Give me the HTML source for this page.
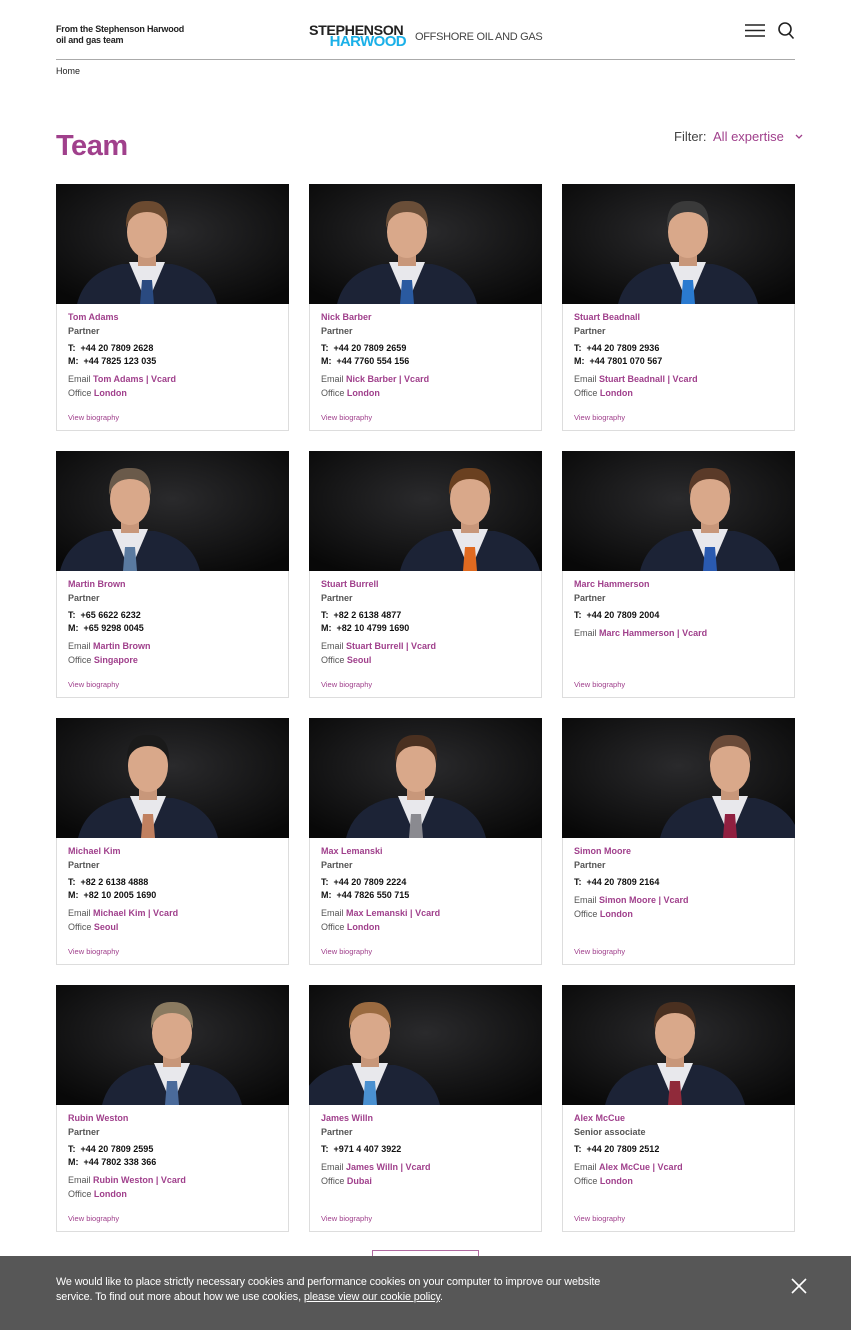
<!DOCTYPE html>
<html><head><meta charset="utf-8"><style>
*{margin:0;padding:0;box-sizing:border-box}
body{width:851px;height:1330px;overflow:hidden;background:#fff;font-family:"Liberation Sans",sans-serif;color:#222;position:relative}
.hdr-l{position:absolute;left:56px;top:24px;font-size:9px;font-weight:bold;line-height:11px;letter-spacing:-.2px}
.logo{position:absolute;left:309px;top:24px;font-weight:bold;font-size:14px;line-height:12px;letter-spacing:-.4px;width:97px}
.logo .a{display:block;transform:scaleX(1.02);transform-origin:left}
.logo .b{color:#1ab0e8;display:block;text-align:right;font-size:15px;letter-spacing:-.6px}
.logo2{position:absolute;left:415px;top:31px;font-size:11px;color:#444;letter-spacing:-.3px}
.line{position:absolute;left:56px;top:59px;width:739px;height:1px;background:#aaa}
.home{position:absolute;left:56px;top:66px;font-size:9px}
h1{position:absolute;left:56px;top:130px;font-size:29px;color:#a0408c;font-weight:bold;letter-spacing:-.5px}
.filter{position:absolute;left:674px;top:129px;font-size:13px;color:#444}
.filter span{color:#a0408c}
.card{position:absolute;width:233px;height:247px;border:1px solid #ddd;background:#fff}
.card svg{display:block;position:absolute;left:-1px;top:-1px}
.info{position:absolute;left:11px;top:125px;font-size:9px;line-height:14px;color:#555}
.p{color:#a0408c;font-weight:bold}
.n{color:#a0408c;font-weight:bold;display:block}
.bk{color:#111;font-weight:bold;line-height:13px}
.vb{position:absolute;left:11px;top:228px;font-size:7.5px;color:#a0408c}
.btn{position:absolute;left:372px;top:1250px;width:107px;height:20px;border:1px solid #b06aa0}
.cookie{position:absolute;left:0;top:1256px;width:851px;height:74px;background:#575757;color:#fff;font-size:10.8px;line-height:15px;padding:19px 0 0 56px;letter-spacing:-.1px}
.cookie u{color:#fff}
.x{position:absolute;left:790px;top:1277px}
</style></head><body>
<div class="hdr-l">From the Stephenson Harwood<br>oil and gas team</div>
<div class="logo"><span class="a">STEPHENSON</span><span class="b">HARWOOD</span></div>
<div class="logo2">OFFSHORE OIL AND GAS</div>
<svg style="position:absolute;left:744px;top:22px" width="52" height="18"><g stroke="#222" stroke-width="1.6" fill="none"><line x1="1" y1="3" x2="21" y2="3"/><line x1="1" y1="8.5" x2="21" y2="8.5"/><line x1="1" y1="14" x2="21" y2="14"/><circle cx="41" cy="7" r="6"/><line x1="45" y1="11.5" x2="49.5" y2="16.5"/></g></svg>
<div class="line"></div>
<div class="home">Home</div>
<h1>Team</h1>
<div class="filter">Filter:&nbsp; <span>All expertise</span></div>
<svg style="position:absolute;left:795px;top:134px" width="8" height="6"><path d="M1 1 L4 4 L7 1" stroke="#a0408c" stroke-width="1.3" fill="none"/></svg>
<div id="cards"></div>
<div class="btn"></div>
<div class="cookie">We would like to place strictly necessary cookies and performance cookies on your computer to improve our website<br>service. To find out more about how we use cookies, <u>please view our cookie policy</u>.</div>
<svg class="x" width="18" height="18"><g stroke="#fff" stroke-width="1.6"><line x1="2" y1="2" x2="16" y2="16"/><line x1="16" y1="2" x2="2" y2="16"/></g></svg>
<script>
var d=[
["Tom Adams","Partner","+44 20 7809 2628","+44 7825 123 035","Tom Adams | Vcard","London",91,"#2a4a80","#6b4a30"],
["Nick Barber","Partner","+44 20 7809 2659","+44 7760 554 156","Nick Barber | Vcard","London",98,"#2a5aa0","#6a4e38"],
["Stuart Beadnall","Partner","+44 20 7809 2936","+44 7801 070 567","Stuart Beadnall | Vcard","London",126,"#2a7ad0","#3a3a3a"],
["Martin Brown","Partner","+65 6622 6232","+65 9298 0045","Martin Brown","Singapore",74,"#5a7aa0","#6a5a4a"],
["Stuart Burrell","Partner","+82 2 6138 4877","+82 10 4799 1690","Stuart Burrell | Vcard","Seoul",161,"#e06a20","#6a4020"],
["Marc Hammerson","Partner","+44 20 7809 2004","","Marc Hammerson | Vcard","",148,"#2a5ab0","#5a3a28"],
["Michael Kim","Partner","+82 2 6138 4888","+82 10 2005 1690","Michael Kim | Vcard","Seoul",92,"#c08060","#1a1a1a"],
["Max Lemanski","Partner","+44 20 7809 2224","+44 7826 550 715","Max Lemanski | Vcard","London",107,"#8a8a90","#4a3020"],
["Simon Moore","Partner","+44 20 7809 2164","","Simon Moore | Vcard","London",168,"#902040","#6a4a38"],
["Rubin Weston","Partner","+44 20 7809 2595","+44 7802 338 366","Rubin Weston | Vcard","London",116,"#4a6a9a","#8a7a60"],
["James Willn","Partner","+971 4 407 3922","","James Willn | Vcard","Dubai",61,"#4a90d0","#9a6a40"],
["Alex McCue","Senior associate","+44 20 7809 2512","","Alex McCue | Vcard","London",113,"#902a3a","#4a3020"]];
var h="";
d.forEach(function(c,i){
var x=56+(i%3)*253,y=184+Math.floor(i/3)*267,cx=c[6];
var svg='<svg width="233" height="120" viewBox="0 0 233 120"><defs><radialGradient id="g'+i+'" cx="50%" cy="40%" r="70%"><stop offset="0" stop-color="#2a2a2c"/><stop offset="1" stop-color="#080808"/></radialGradient></defs><rect width="233" height="120" fill="url(#g'+i+')"/>'+
'<path d="M'+(cx-70)+' 120 Q'+(cx-62)+' 88 '+(cx-25)+' 80 L'+(cx+25)+' 80 Q'+(cx+62)+' 88 '+(cx+70)+' 120Z" fill="#1c2336"/>'+
'<path d="M'+(cx-18)+' 78 L'+cx+' 120 L'+(cx+18)+' 78Z" fill="#e8e8ec"/>'+
'<path d="M'+(cx-5)+' 96 L'+(cx+5)+' 96 L'+(cx+7)+' 120 L'+(cx-7)+' 120Z" fill="'+c[7]+'"/>'+
'<rect x="'+(cx-9)+'" y="62" width="18" height="20" fill="#c8977a"/>'+
'<ellipse cx="'+cx+'" cy="48" rx="20" ry="26" fill="#d9a88a"/>'+
'<path d="M'+(cx-21)+' 44 Q'+(cx-22)+' 16 '+cx+' 17 Q'+(cx+22)+' 16 '+(cx+21)+' 44 Q'+(cx+16)+' 28 '+cx+' 28 Q'+(cx-16)+' 28 '+(cx-21)+' 44Z" fill="'+c[8]+'"/></svg>';
h+='<div class="card" style="left:'+x+'px;top:'+y+'px">'+svg+'<div class="info"><span class="n">'+c[0]+'</span><span style="font-weight:bold">'+c[1]+'</span><div style="height:4px"></div><div class="bk">T:&nbsp; '+c[2]+'</div>'+(c[3]?'<div class="bk">M:&nbsp; '+c[3]+'</div>':'')+'<div style="height:4px"></div>Email <span class="p">'+c[4]+'</span>'+(c[5]?'<br>Office <span class="p">'+c[5]+'</span>':'')+'</div><div class="vb">View biography</div></div>';
});
document.getElementById("cards").innerHTML=h;
</script>
</body></html>
